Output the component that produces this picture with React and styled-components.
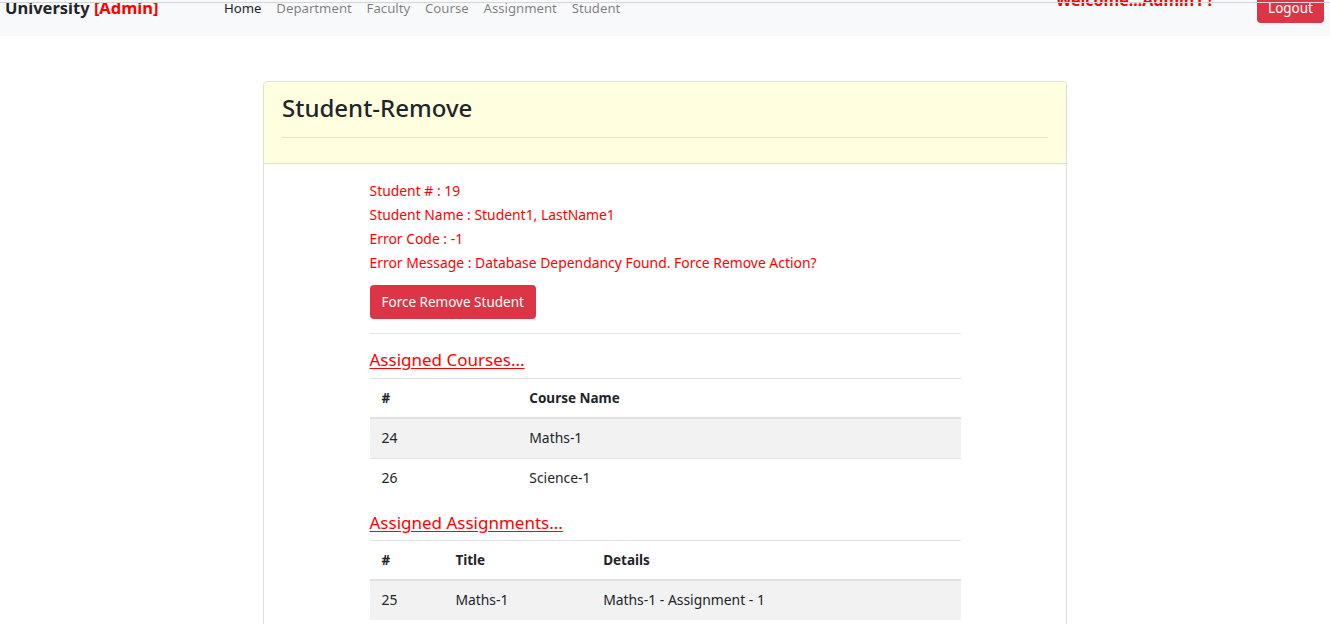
import React from 'react';
import styled, { createGlobalStyle } from 'styled-components';

const GlobalStyle = createGlobalStyle`
  html, body {
    margin: 0;
    padding: 0;
    background: #fff;
    overflow: hidden;
  }
  body {
    font-family: "Noto Sans", "Open Sans", sans-serif;
    color: #212529;
    font-size: 13px;
  }
`

const Page = styled.div`
  position: relative;
  width: 1330px;
  height: 624px;
  overflow: hidden;
`

const TopLine = styled.div`
  position: absolute;
  top: 2px;
  left: 0;
  right: 0;
  height: 1px;
  background: #d3d5d8;
  z-index: 2;
`

const Navbar = styled.nav`
  display: flex;
  align-items: center;
  height: 52px;
  margin-top: -16px;
  padding: 0 6px 0 5px;
  background: #f8f9fa;
`

const Brand = styled.div`
  width: 219px;
  font-size: 16.5px;
  font-weight: 700;
  color: #212529;
  white-space: nowrap;
  margin-top: -6px;
`

const BrandTag = styled.span`
  color: #ff0000;
`

const NavLinks = styled.div`
  display: flex;
  gap: 14.8px;
  flex: 1;
  margin-top: -4px;
`

const NavLink = styled.a`
  font-size: 13.2px;
  color: ${p => (p.$active ? '#212529' : 'rgba(0,0,0,0.5)')};
  text-decoration: none;
`

const Welcome = styled.div`
  color: #ff0000;
  font-weight: 700;
  font-size: 16px;
  margin-right: 45px;
  margin-top: -20px;
`

const LogoutButton = styled.button`
  height: 31px;
  padding: 0 11px;
  margin-top: -5px;
  border: none;
  border-radius: 4px;
  background: #dc3545;
  color: #fff;
  font-family: inherit;
  font-size: 13.5px;
`

const Main = styled.main`
  display: flex;
  justify-content: center;
  padding-top: 45px;
`

const Card = styled.section`
  width: 804px;
  box-sizing: border-box;
  border: 1px solid rgba(0,0,0,0.125);
  border-radius: 4px;
  overflow: hidden;
`

const CardHeader = styled.header`
  background: #ffffe0;
  padding: 11px 18px 25px;
  border-bottom: 1px solid rgba(0,0,0,0.125);
`

const Title = styled.h2`
  margin: 0;
  font-size: 24px;
  font-weight: 500;
  line-height: 29px;
`

const Rule = styled.hr`
  margin: ${p => p.$m || '15px 0 0'};
  border: 0;
  border-top: 1px solid rgba(0,0,0,0.1);
`

const CardBody = styled.div`
  padding: 15px 0 40px;
`

const Content = styled.div`
  width: 591px;
  margin: 0 auto;
`

const InfoLine = styled.div`
  color: #ff0000;
  line-height: 24px;
  font-size: 13.9px;
`

const DangerButton = styled.button`
  margin-top: 10px;
  height: 34px;
  padding: 0 12px;
  border: none;
  border-radius: 4px;
  background: #dc3545;
  color: #fff;
  font-family: inherit;
  font-size: 13.5px;
`

const SectionTitle = styled.a`
  display: block;
  color: #ff0000;
  font-size: 17px;
  line-height: 22px;
  text-decoration: underline;
  text-underline-offset: 2px;
  margin: ${p => p.$m || '15px 0 7px'};
`

const Table = styled.table`
  width: 100%;
  border-collapse: collapse;
  table-layout: fixed;
  font-size: 13.9px;
`

const Th = styled.th`
  box-sizing: border-box;
  text-align: left;
  font-weight: 700;
  font-size: 13.5px;
  padding: 9px 12px 9px;
  line-height: 20px;
  border-top: 1px solid #dee2e6;
  border-bottom: 2px solid #dee2e6;
  width: ${p => p.$w || 'auto'};
`

const Row = styled.tr`
  background: ${p => (p.$striped ? '#f2f2f2' : 'transparent')};
`

const Td = styled.td`
  padding: 9px 12px 10px;
  line-height: 20px;
  border-top: 1px solid #dee2e6;
`

const navItems = ['Home', 'Department', 'Faculty', 'Course', 'Assignment', 'Student'];

const courses = [
  { id: 24, name: 'Maths-1' },
  { id: 26, name: 'Science-1' },
];

const assignments = [
  { id: 25, title: 'Maths-1', details: 'Maths-1 - Assignment - 1' },
];

export default function App() {
  return (
    <Page>
      <GlobalStyle />
      <TopLine />
      <Navbar>
        <Brand>University <BrandTag>[Admin]</BrandTag></Brand>
        <NavLinks>
          {navItems.map((n, i) => (
            <NavLink key={n} $active={i === 0}>{n}</NavLink>
          ))}
        </NavLinks>
        <Welcome>Welcome...Admin1 !</Welcome>
        <LogoutButton>Logout</LogoutButton>
      </Navbar>

      <Main>
        <Card>
          <CardHeader>
            <Title>Student-Remove</Title>
            <Rule />
          </CardHeader>
          <CardBody>
            <Content>
              <InfoLine>Student # : 19</InfoLine>
              <InfoLine>Student Name : Student1, LastName1</InfoLine>
              <InfoLine>Error Code : -1</InfoLine>
              <InfoLine>Error Message : Database Dependancy Found. Force Remove Action?</InfoLine>
              <DangerButton>Force Remove Student</DangerButton>
              <Rule $m="14px 0 0" />

              <SectionTitle>Assigned Courses...</SectionTitle>
              <Table>
                <thead>
                  <tr>
                    <Th $w="25%">#</Th>
                    <Th>Course Name</Th>
                  </tr>
                </thead>
                <tbody>
                  {courses.map((c, i) => (
                    <Row key={c.id} $striped={i % 2 === 0}>
                      <Td>{c.id}</Td>
                      <Td>{c.name}</Td>
                    </Row>
                  ))}
                </tbody>
              </Table>

              <SectionTitle $m="14px 0 6px">Assigned Assignments...</SectionTitle>
              <Table>
                <thead>
                  <tr>
                    <Th $w="12.5%">#</Th>
                    <Th $w="25%">Title</Th>
                    <Th>Details</Th>
                  </tr>
                </thead>
                <tbody>
                  {assignments.map((a, i) => (
                    <Row key={a.id} $striped={i % 2 === 0}>
                      <Td>{a.id}</Td>
                      <Td>{a.title}</Td>
                      <Td>{a.details}</Td>
                    </Row>
                  ))}
                </tbody>
              </Table>
            </Content>
          </CardBody>
        </Card>
      </Main>
    </Page>
  );
}
